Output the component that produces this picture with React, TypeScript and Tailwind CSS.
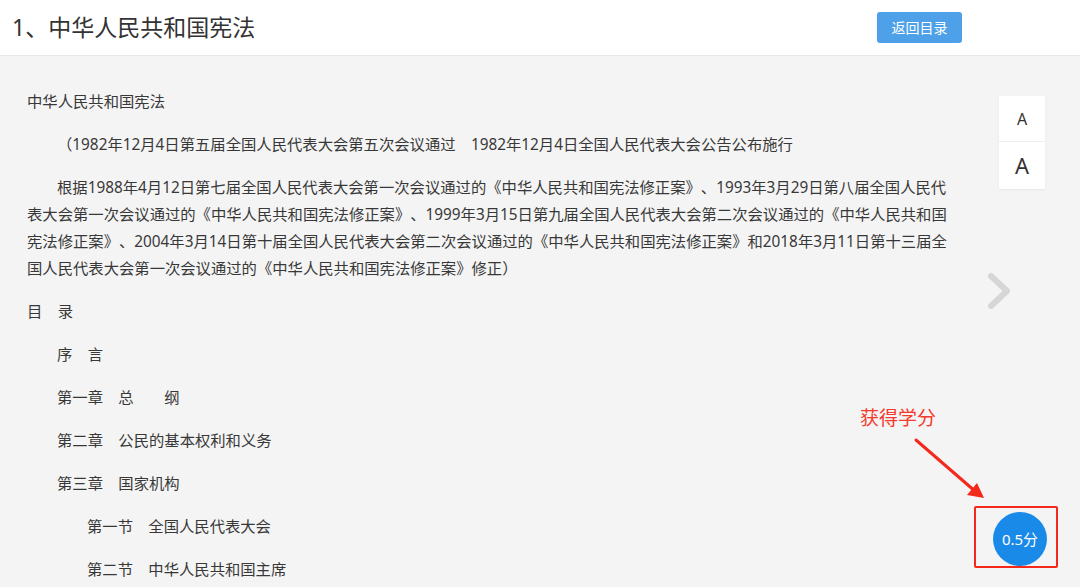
import React from "react";

const font = {
  fontFamily: '"Noto Sans", "Noto Sans CJK SC", sans-serif',
};

const toc: { text: string; indent: string }[] = [
  { text: "目　录", indent: "pl-0" },
  { text: "序　言", indent: "pl-[30px]" },
  { text: "第一章　总　　纲", indent: "pl-[30px]" },
  { text: "第二章　公民的基本权利和义务", indent: "pl-[30px]" },
  { text: "第三章　国家机构", indent: "pl-[30px]" },
  { text: "第一节　全国人民代表大会", indent: "pl-[60px]" },
  { text: "第二节　中华人民共和国主席", indent: "pl-[60px]" },
];

export default function App() {
  return (
    <div
      className="relative w-[1080px] h-[587px] overflow-hidden bg-[#f4f4f4] text-[#333] [text-spacing-trim:space-all]"
      style={font}
    >
      {/* header */}
      <header className="h-[56px] bg-white border-b border-[#e8e8e8] flex items-center justify-between pl-[12px] pr-[118px]">
        <h1 className="text-[23px] leading-none text-[#333]">
          1、中华人民共和国宪法
        </h1>
        <button className="w-[85px] h-[31px] -mt-[1px] rounded-[3px] bg-[#4ea1e8] text-white text-[14px]">
          返回目录
        </button>
      </header>

      <div className="flex">
        {/* article */}
        <div className="w-[923px] ml-[27px] pt-[32px] text-[15.33px] leading-[27px] text-[#383838]">
          <p className="mb-[16px]">中华人民共和国宪法</p>
          <p className="mb-[16px] indent-[30px]">
            （1982年12月4日第五届全国人民代表大会第五次会议通过　1982年12月4日全国人民代表大会公告公布施行
          </p>
          <p className="mb-[16px] indent-[30px]">
            根据1988年4月12日第七届全国人民代表大会第一次会议通过的《中华人民共和国宪法修正案》、1993年3月29日第八届全国人民代表大会第一次会议通过的《中华人民共和国宪法修正案》、1999年3月15日第九届全国人民代表大会第二次会议通过的《中华人民共和国宪法修正案》、2004年3月14日第十届全国人民代表大会第二次会议通过的《中华人民共和国宪法修正案》和2018年3月11日第十三届全国人民代表大会第一次会议通过的《中华人民共和国宪法修正案》修正）
          </p>
          {toc.map((t) => (
            <p key={t.text} className={`mb-[16px] ${t.indent}`}>
              {t.text}
            </p>
          ))}
        </div>

        {/* right tools */}
        <div className="flex flex-col pl-[49px] pt-[40px]">
          <div className="w-[46px] bg-white shadow-[0_1px_2px_rgba(0,0,0,0.06)] flex flex-col">
            <button className="h-[46px] flex items-center justify-center text-[16px] text-[#333] border-b border-[#eeeeee]">
              A
            </button>
            <button className="h-[47px] flex items-center justify-center text-[22px] text-[#333]">
              A
            </button>
          </div>
          <svg
            className="mt-[84px] -ml-[11px]"
            width="24"
            height="36"
            viewBox="0 0 24 36"
          >
            <path
              d="M3 3 L19 18 L3 33"
              fill="none"
              stroke="#d6d6d6"
              strokeWidth="6"
              strokeLinecap="round"
              strokeLinejoin="round"
            />
          </svg>
          <div className="mt-[203px] -ml-[6px] w-[54px] h-[54px] rounded-full bg-[#1a8ae8] flex items-center justify-center text-white text-[15px]">
            0.5分
          </div>
        </div>
      </div>

      {/* annotation */}
      <span className="absolute left-[860px] top-[406px] text-[19px] leading-[24px] text-[#f5392c]">
        获得学分
      </span>
      <svg
        className="absolute left-[900px] top-[430px]"
        width="100"
        height="80"
        viewBox="0 0 100 80"
      >
        <path d="M16 10 L76 62" stroke="#f5281c" strokeWidth="3" strokeLinecap="round" />
        <path d="M84 68 L67 65 L77 53 Z" fill="#f5281c" />
      </svg>
      <div className="absolute left-[974px] top-[506px] w-[84px] h-[62px] border-2 border-[#f5281c] rounded-[2px]" />
    </div>
  );
}
